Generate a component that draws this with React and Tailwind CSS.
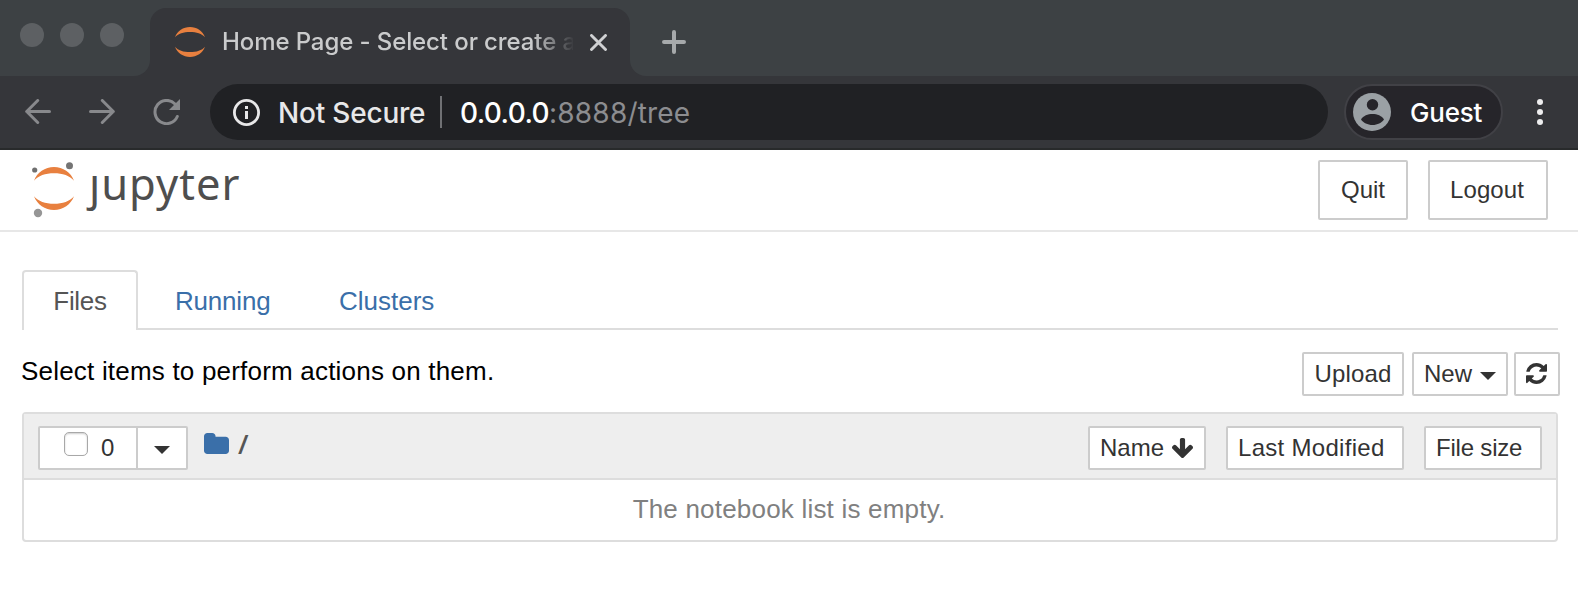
import React from 'react';

function Ring({ className }) {
  return (
    <svg className={className} viewBox="0 0 40 44" preserveAspectRatio="none" fill="#e8803f">
      <path d="M0 15C3 6 11 0 20 0s17 6 20 15C36 9.500 28.500 7.200 20 7.200S4 9.500 0 15Z" />
      <path d="M0 29c3 9 11 15 20 15s17-6 20-15c-4 5.500-11.500 7.800-20 7.800S4 34.500 0 29Z" />
    </svg>
  );
}

function Caret() {
  return (
    <svg className="h-2 w-4 shrink-0" viewBox="0 0 16 8" fill="#333">
      <path d="M0 0h16L8 8Z" />
    </svg>
  );
}

function Button({ className = '', children }) {
  return (
    <button className={`flex shrink-0 items-center rounded-[2px] border-2 border-[#ccc] bg-white text-[24px] leading-none text-[#333] ${className}`}>
      {children}
    </button>
  );
}

function TabStrip() {
  return (
    <div className="flex h-[76px] bg-[#3d4144]">
      <div className="flex w-[150px] bg-[#35363a]">
        <div className="flex w-full gap-4 rounded-br-[16px] bg-[#3d4144] pt-[23px] pl-5">
          <i className="size-6 rounded-full bg-[#5d6063]" />
          <i className="size-6 rounded-full bg-[#5d6063]" />
          <i className="size-6 rounded-full bg-[#5d6063]" />
        </div>
      </div>
      <div className="mt-2 flex h-[68px] w-[480px] items-center rounded-t-[16px] bg-[#35363a] pl-[25px]">
        <Ring className="h-[30px] w-[30px] shrink-0" />
        <div className="ml-[17px] w-[351px] whitespace-nowrap pb-px text-[24px] leading-[34px] font-medium tracking-[-0.1px] text-[#cacbcc] [mask-image:linear-gradient(to_right,#000_310px,transparent_353px)]">
          Home Page - Select or create a
        </div>
        <svg className="ml-[17px] size-[17px] shrink-0" viewBox="0 0 17 17" stroke="#d0d1d3" strokeWidth="2.900" strokeLinecap="round">
          <path d="m1.500 1.500 14 14m0-14-14 14" />
        </svg>
      </div>
      <div className="flex flex-1 bg-[#35363a]">
        <div className="w-full rounded-bl-[16px] bg-[#3d4144] pt-[30px] pl-8">
          <svg className="size-6" viewBox="0 0 24 24" stroke="#a6a9ab" strokeWidth="4" strokeLinecap="round">
            <path d="M12 2v20M2 12h20" />
          </svg>
        </div>
      </div>
    </div>
  );
}

function Toolbar() {
  return (
    <div className="flex h-[74px] items-center border-b-2 border-[#282a2b] bg-[#35363a]">
      <svg className="ml-[25px] h-[26px] w-[26px]" viewBox="0 0 26 26" fill="none" stroke="#88898c" strokeWidth="3" strokeLinecap="round" strokeLinejoin="round">
        <path d="M24.500 12.500H1.800M12.700 1.500 1.700 12.500l11 11" />
      </svg>
      <svg className="ml-[38px] h-[26px] w-[26px]" viewBox="0 0 26 26" fill="none" stroke="#88898c" strokeWidth="3" strokeLinecap="round" strokeLinejoin="round">
        <path d="M1.500 12.500h22.700M13.300 1.500l11 11-11 11" />
      </svg>
      <svg className="ml-[38px] h-[26px] w-[28px]" viewBox="0 0 28 26" fill="none">
        <path d="M22 5A11.600 11.600 0 1 0 24.300 17.500" stroke="#88898c" strokeWidth="3" strokeLinecap="round" />
        <path d="M27 0v11H16Z" fill="#88898c" />
      </svg>
      <div className="ml-[29px] flex h-14 w-[1118px] items-center rounded-full bg-[#202124] pl-[23px] text-[28px] leading-none">
        <svg className="size-[27px]" viewBox="0 0 27 27" fill="none">
          <circle cx="13.500" cy="13.500" r="12.100" stroke="#e8e8e9" strokeWidth="2.800" />
          <path d="M12 7h3v3h-3zM12 12h3v8h-3z" fill="#e8e8e9" />
        </svg>
        <span className="ml-[18px] w-[147px] whitespace-nowrap pt-px font-medium tracking-[-0.2px] text-[#e8e8e9]">Not Secure</span>
        <i className="ml-[15px] h-8 w-0.5 bg-[#707174]" />
        <span className="ml-[18px] whitespace-nowrap pt-px font-medium tracking-[-0.6px] text-white">
          0.0.0.0<span className="font-normal tracking-[0.2px] text-[#8c8d90]">:8888/tree</span>
        </span>
      </div>
      <div className="ml-4 flex h-14 w-[159px] items-center rounded-full border-2 border-[#414146] bg-[#26252a] pl-[7px]">
        <svg className="size-[38px]" viewBox="0 0 38 38">
          <circle cx="19" cy="19" r="19" fill="#9ba1a5" />
          <circle cx="19.500" cy="11.700" r="5.700" fill="#26252a" />
          <path d="M8 26.500c2-3.700 7-5.500 11.500-5.500S29 22.800 31 26.500c-2.400 3.200-6.500 5.500-11.500 5.500S10.400 29.700 8 26.500Z" fill="#26252a" />
        </svg>
        <span className="ml-[19px] pt-0.5 text-[26px] leading-none font-medium tracking-[-0.2px] text-white">Guest</span>
      </div>
      <svg className="ml-[34px] h-[28px] w-[6px]" viewBox="0 0 6 28" fill="#ededee">
        <circle cx="3" cy="4" r="3" />
        <circle cx="3" cy="14" r="3" />
        <circle cx="3" cy="24" r="3" />
      </svg>
    </div>
  );
}

function PageHeader() {
  return (
    <header className="flex h-[82px] items-start border-b-2 border-[#e7e7e7] pr-[30px]">
      <svg className="mt-3 ml-8 h-[56px] w-[44px]" viewBox="0 0 44 56">
        <circle cx="2.700" cy="8" r="2.600" fill="#6f6f6f" />
        <circle cx="37.500" cy="3.800" r="3.500" fill="#747474" />
        <circle cx="6" cy="51" r="4.200" fill="#969696" />
        <g fill="#e8803f">
          <path d="M2 18.700C5 10.500 13 5 22 5s17 5.500 20 13.700C38 13.600 30.500 11.200 22 11.200S6 13.600 2 18.700Z" />
          <path d="M2 34.300C5 42.500 13 48 22 48s17-5.500 20-13.700c-4 5.100-11.500 7.500-20 7.500S6 39.400 2 34.300Z" />
        </g>
      </svg>
      <div className="ml-[13px] pt-[3px] font-['Noto_Sans','Open_Sans',sans-serif] text-[43.500px] leading-[60px] tracking-[1px] text-[#4e4e4e]">ȷupyter</div>
      <div className="mt-[10px] ml-auto flex gap-5">
        <Button className="h-[60px] w-[90px] justify-center">Quit</Button>
        <Button className="h-[60px] w-[120px] justify-center pr-0.5 tracking-[0.1px]">Logout</Button>
      </div>
    </header>
  );
}

function Tabs() {
  return (
    <nav className="mt-[38px] flex h-[60px] text-[26px] leading-none">
      <div className="flex w-[116px] items-center justify-center rounded-t-[4px] border-2 border-b-0 border-[#ddd] tracking-[-0.3px] text-[#555]">Files</div>
      <div className="flex flex-1 items-center border-b-2 border-[#ddd] pt-1 text-[#3a6fa9]">
        <span className="ml-[37px] w-[164px] tracking-[-0.2px]">Running</span>
        <span>Clusters</span>
      </div>
    </nav>
  );
}

export default function App() {
  return (
    <div className="h-[602px] w-[1578px] overflow-hidden bg-white font-['Liberation_Sans',Arial,sans-serif]">
      <div className="font-['Inter',sans-serif]">
        <TabStrip />
        <Toolbar />
      </div>
      <PageHeader />
      <main className="pr-5 pl-[22px]">
        <Tabs />
        <div className="-mr-0.5 mt-[22px] flex h-11">
          <p className="-ml-px mr-auto whitespace-nowrap pt-1 text-[26px] leading-[30px] tracking-[0.2px] text-black">Select items to perform actions on them.</p>
          <Button className="mr-2 w-[102px] justify-center tracking-[0.15px]">Upload</Button>
          <Button className="mr-1.5 w-24 gap-2 pl-2.5">New<span className="pt-1"><Caret /></span></Button>
          <Button className="w-[46px] justify-center pr-0.5 pb-0.5">
            <svg className="size-[21px] shrink-0" viewBox="0 0 1536 1536" fill="#333">
              <path d="M1511 928q0 5-1 7-64 268-268 434.500t-478 166.500q-146 0-282.500-55t-243.500-157l-129 129q-19 19-45 19t-45-19-19-45v-448q0-26 19-45t45-19h448q26 0 45 19t19 45-19 45l-137 137q71 66 161 102t187 36q134 0 250-65t186-179q11-17 53-117 8-23 30-23h192q13 0 22.500 9.500t9.500 22.500zm25-800v448q0 26-19 45t-45 19h-448q-26 0-45-19t-19-45 19-45l138-138q-148-137-349-137-134 0-250 65t-186 179q-11 17-53 117-8 23-30 23h-199q-13 0-22.500-9.500t-9.500-22.500v-7q65-268 270-434.500t480-166.500q146 0 284 55.500t245 156.500l130-129q19-19 45-19t45 19 19 45z" />
            </svg>
          </Button>
        </div>
        <section className="mt-4 h-[130px] rounded-[4px] border-2 border-[#ddd]">
          <div className="flex h-[66px] items-start border-b-2 border-[#ddd] bg-[#eee] pt-3 pr-3.5 pl-3.5">
            <div className="flex h-11 w-[150px] rounded-[2px] border-2 border-[#ccc] bg-white text-[24px] leading-none text-[#333]">
              <div className="flex w-[98px] items-start border-r-2 border-[#ccc] pl-6">
                <i className="mt-1 size-6 rounded-[5px] border border-[#a8a8a8] bg-white shadow-[inset_0_1px_2px_rgba(0,0,0,0.2)]" />
                <span className="ml-[13px] pt-2">0</span>
              </div>
              <div className="flex flex-1 items-center justify-center pt-1"><Caret /></div>
            </div>
            <svg className="mt-[7px] ml-4 h-[21px] w-[25px]" viewBox="64 128 1664 1408" preserveAspectRatio="none" fill="#3a6fa9">
              <path d="M1728 608v704q0 92-66 158t-158 66h-1216q-92 0-158-66t-66-158v-960q0-92 66-158t158-66h320q92 0 158 66t66 158v32h672q92 0 158 66t66 158z" />
            </svg>
            <span className="ml-[9px] pt-1 font-['Open_Sans',sans-serif] text-[27px] leading-[28px] font-semibold text-[#555]">/</span>
            <Button className="ml-auto h-11 w-[118px] gap-2 pl-2.5">
              Name
              <svg className="mb-px h-[20px] w-[21px] shrink-0" viewBox="117 128 1558 1483" fill="#333">
                <path d="M1675 832q0 53-37 90l-651 652q-39 37-91 37-53 0-90-37l-651-652q-38-36-38-90 0-53 38-91l74-75q39-37 91-37 53 0 90 37l294 294v-704q0-52 38-90t90-38h128q52 0 90 38t38 90v704l294-294q37-37 90-37 52 0 91 37l75 75q37 39 37 91z" />
              </svg>
            </Button>
            <Button className="ml-5 h-11 w-[178px] pl-2.5 tracking-[0.3px]">Last Modified</Button>
            <Button className="ml-5 h-11 w-[118px] pl-2.5 tracking-[-0.2px]">File size</Button>
          </div>
          <p className="pt-[13px] pr-0.5 text-center text-[26px] leading-[32px] tracking-[0.2px] text-[#808080]">The notebook list is empty.</p>
        </section>
      </main>
    </div>
  );
}
